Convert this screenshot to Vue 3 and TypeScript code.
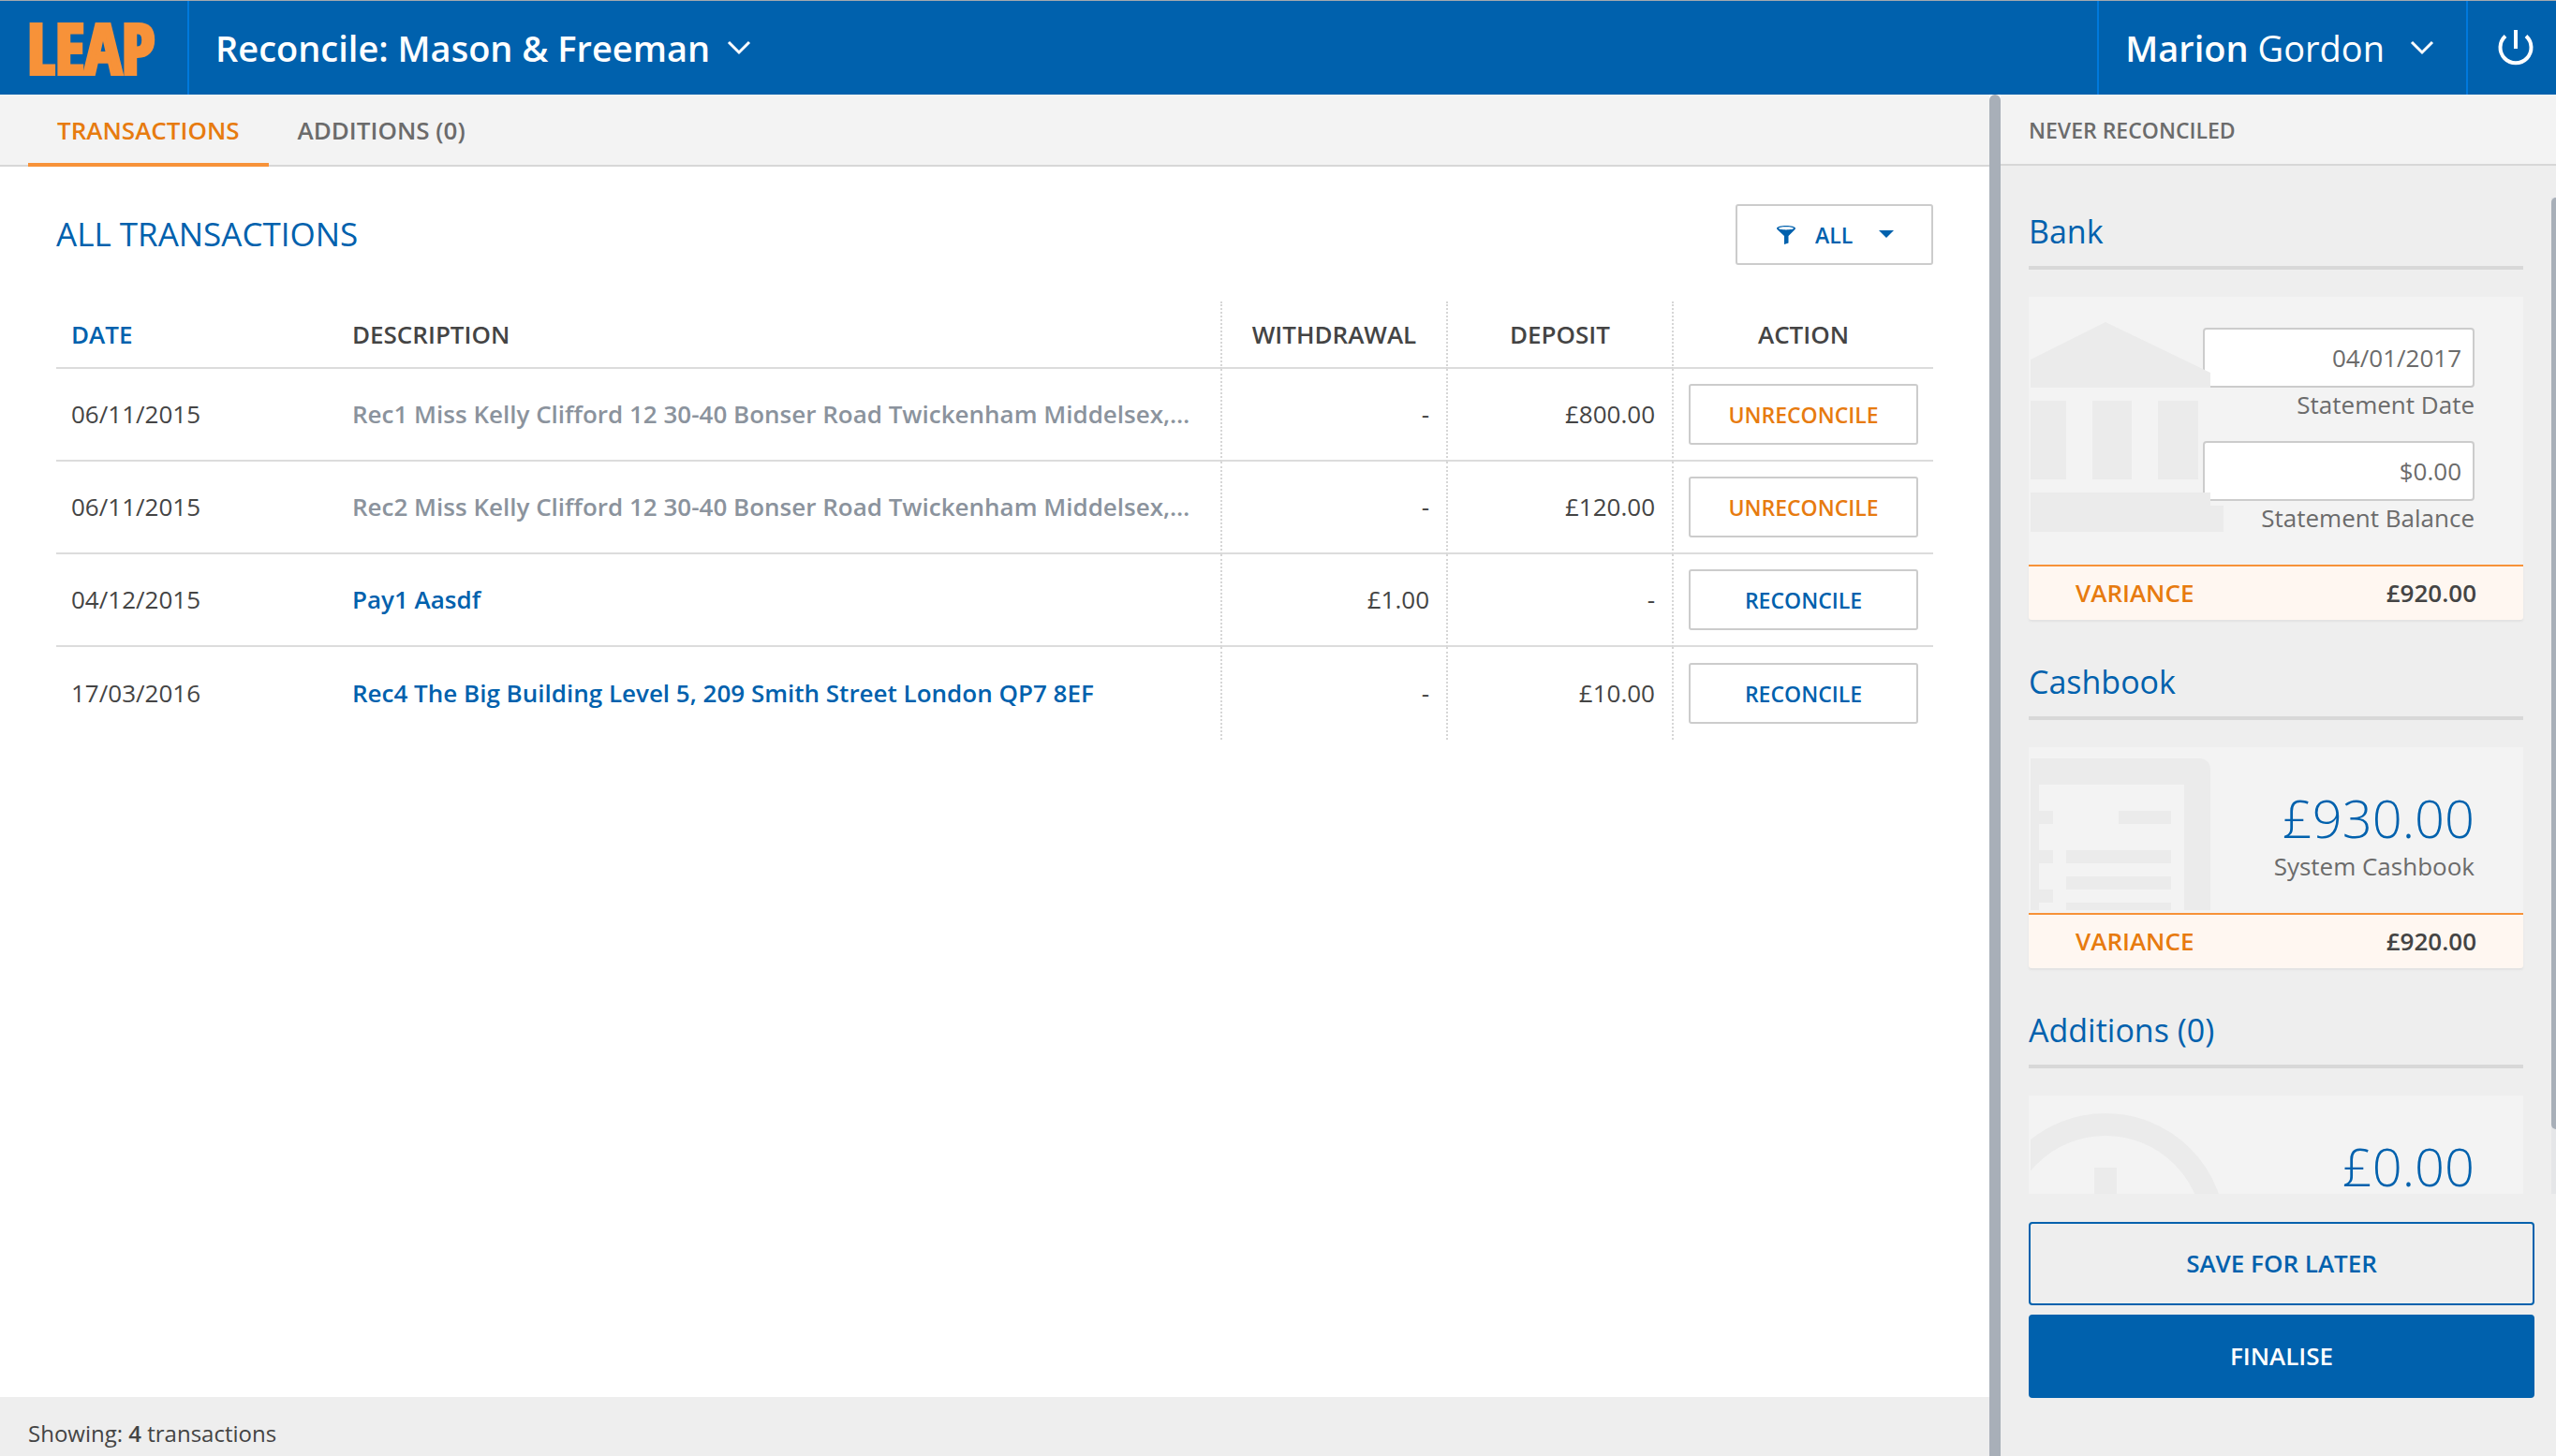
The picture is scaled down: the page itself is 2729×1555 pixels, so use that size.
<script setup lang="ts">
import { ref } from 'vue'

interface Transaction {
  id: number
  date: string
  description: string
  withdrawal: string
  deposit: string
  reconciled: boolean
}

const transactions = ref<Transaction[]>([
  { id: 1, date: '06/11/2015', description: 'Rec1 Miss Kelly Clifford 12 30-40 Bonser Road Twickenham Middelsex,…', withdrawal: '-', deposit: '£800.00', reconciled: true },
  { id: 2, date: '06/11/2015', description: 'Rec2 Miss Kelly Clifford 12 30-40 Bonser Road Twickenham Middelsex,…', withdrawal: '-', deposit: '£120.00', reconciled: true },
  { id: 3, date: '04/12/2015', description: 'Pay1 Aasdf', withdrawal: '£1.00', deposit: '-', reconciled: false },
  { id: 4, date: '17/03/2016', description: 'Rec4 The Big Building Level 5, 209 Smith Street London QP7 8EF', withdrawal: '-', deposit: '£10.00', reconciled: false },
])

const statementDate = ref('04/01/2017')
const statementBalance = ref('$0.00')
const filter = ref('all')
</script>

<template>
  <div class="app">
    <header class="topbar">
      <a class="logo" href="#">LEAP</a>
      <button class="account" type="button">
        <span>Reconcile: Mason &amp; Freeman</span>
        <svg class="chevron" viewBox="0 0 26 16" aria-hidden="true"><path d="M2 2l11 11L24 2" /></svg>
      </button>
      <button class="user" type="button">
        <span><b>Marion</b> Gordon</span>
        <svg class="chevron" viewBox="0 0 26 16" aria-hidden="true"><path d="M2 2l11 11L24 2" /></svg>
      </button>
      <button class="power" type="button" aria-label="Log out">
        <svg viewBox="0 0 38 38" aria-hidden="true">
          <path d="M8 6.500A16.500 16.500 0 1 0 30 6.500" />
          <path d="M19 0V20" />
        </svg>
      </button>
    </header>

    <div class="columns">
      <main class="main">
        <nav class="tabs">
          <a class="tab active" href="#transactions">TRANSACTIONS</a>
          <a class="tab" href="#additions">ADDITIONS (0)</a>
        </nav>

        <section class="content">
          <div class="heading">
            <h1>ALL TRANSACTIONS</h1>
            <div class="filter">
              <svg class="funnel" viewBox="0 0 20 20" aria-hidden="true">
                <path fill-rule="evenodd" d="M10 0c5.500 0 10 1.200 10 2.700 0 .6-.4 1.200-1 1.700L12.500 11v7.500L8 20v-9L1 4.400C.4 3.900 0 3.300 0 2.700 0 1.200 4.500 0 10 0zm0 1.200c-4.400 0-8 .7-8 1.600s3.600 1.600 8 1.600 8-.7 8-1.600-3.600-1.600-8-1.600z" />
              </svg>
              <select v-model="filter" aria-label="Filter transactions">
                <option value="all">ALL</option>
                <option value="reconciled">RECONCILED</option>
                <option value="unreconciled">UNRECONCILED</option>
              </select>
              <svg class="caret" viewBox="0 0 16 8" aria-hidden="true"><path d="M0 0h16L8 8z" /></svg>
            </div>
          </div>

          <table>
            <colgroup>
              <col class="col-date" />
              <col />
              <col class="col-amount" />
              <col class="col-amount" />
              <col class="col-action" />
            </colgroup>
            <thead>
              <tr>
                <th class="sorted">DATE</th>
                <th>DESCRIPTION</th>
                <th class="center ruled">WITHDRAWAL</th>
                <th class="center ruled">DEPOSIT</th>
                <th class="center ruled">ACTION</th>
              </tr>
            </thead>
            <tbody>
              <tr v-for="t in transactions" :key="t.id">
                <td>{{ t.date }}</td>
                <td class="description" :class="{ done: t.reconciled }">{{ t.description }}</td>
                <td class="amount ruled">{{ t.withdrawal }}</td>
                <td class="amount ruled">{{ t.deposit }}</td>
                <td class="ruled">
                  <button class="action" :class="{ undo: t.reconciled }" type="button">
                    {{ t.reconciled ? 'UNRECONCILE' : 'RECONCILE' }}
                  </button>
                </td>
              </tr>
            </tbody>
          </table>
        </section>

        <footer class="status">Showing: <b>{{ transactions.length }}</b>&nbsp;transactions</footer>
      </main>

      <div class="resizer"></div>

      <aside class="sidebar">
        <div class="last">NEVER RECONCILED</div>

        <div class="scroll">
          <div class="scroll-body">
            <section class="group">
              <h2>Bank</h2>
              <div class="card">
                <div class="fields">
                  <input id="statement-date" v-model="statementDate" type="text" />
                  <label for="statement-date">Statement Date</label>
                  <input id="statement-balance" v-model="statementBalance" type="text" />
                  <label for="statement-balance">Statement Balance</label>
                </div>
                <svg class="mark" viewBox="0 0 210 287" aria-hidden="true">
                  <path d="M0 67L80 27l112 54v16H0zM0 111h38v84H0zM66 111h42v84H66zM136 111h43v84h-43zM0 209h192v14h14v28H0z" />
                </svg>
              </div>
              <div class="variance"><span>VARIANCE</span><b>£920.00</b></div>
            </section>

            <section class="group">
              <h2>Cashbook</h2>
              <div class="card">
                <div class="total">£930.00</div>
                <div>System Cashbook</div>
                <svg class="mark" viewBox="0 0 210 176" aria-hidden="true">
                  <path fill-rule="evenodd" d="M0 12h182q10 2 10 12v150H0zM9 40v28h15v14H9v28h15v14H9v28h15v14H9v8h155V40z" />
                  <path d="M94 68h56v14H94zM38 110h112v14H38zM38 138h112v14H38zM38 166h112v8H38z" />
                </svg>
              </div>
              <div class="variance"><span>VARIANCE</span><b>£920.00</b></div>
            </section>

            <section class="group">
              <h2>Additions (0)</h2>
              <div class="card">
                <div class="total">£0.00</div>
                <svg class="mark" viewBox="0 0 210 176" aria-hidden="true">
                  <circle cx="80" cy="147" r="116" />
                  <path d="M68 77h24v58h58v24H92v17H68v-17H10v-24h58z" />
                </svg>
              </div>
            </section>
          </div>
          <div class="track"><div class="thumb"></div></div>
        </div>

        <div class="buttons">
          <button class="save" type="button">SAVE FOR LATER</button>
          <button class="finalise" type="button">FINALISE</button>
        </div>
      </aside>
    </div>
  </div>
</template>

<style>
body {
  margin: 0;
}
</style>

<style scoped>
* {
  box-sizing: border-box;
}

.app {
  display: flex;
  flex-direction: column;
  height: 100vh;
  overflow: hidden;
  background: #fff;
  color: #444;
  font: 400 26px/36px "Open Sans", sans-serif;
}

button,
select,
input {
  margin: 0;
  font: inherit;
}

button {
  cursor: pointer;
}

a {
  text-decoration: none;
}

b {
  font-weight: 600;
}

/* Top bar */
.topbar {
  display: flex;
  flex: none;
  height: 101px;
  border-top: 1px solid #a3a9ae;
  background: #0061ad;
  color: #fff;
}

.logo {
  display: flex;
  align-items: center;
  width: 202px;
  padding-left: 29px;
  border-right: 2px solid #0079dc;
  color: #f79239;
  font: 800 74px/98px "Open Sans Condensed", "Open Sans", sans-serif;
  -webkit-text-stroke: 4px #f79239;
}

.topbar button {
  display: flex;
  align-items: center;
  padding: 0 28px;
  border: 0;
  background: none;
  color: inherit;
  font-size: 38px;
}

.topbar .account {
  gap: 18px;
  font-weight: 600;
}

.topbar .user {
  gap: 27px;
  margin-left: auto;
  padding-right: 34px;
  border-left: 2px solid #0079dc;
}

.topbar .power {
  padding: 0 24px 0 32px;
  border-left: 2px solid #0079dc;
}

.topbar svg {
  fill: none;
  stroke: #fff;
}

.chevron {
  width: 26px;
  height: 16px;
  stroke-width: 3px;
}

.power svg {
  width: 38px;
  height: 38px;
  stroke-width: 4px;
}

/* Main column */
.columns {
  display: flex;
  flex: 1;
  min-height: 0;
}

.main {
  display: flex;
  flex: 1;
  flex-direction: column;
  min-width: 0;
}

.tabs {
  display: flex;
  flex: none;
  height: 77px;
  padding-left: 30px;
  border-bottom: 2px solid #d7d7d7;
  background: #f3f3f3;
}

.tab {
  height: 77px;
  padding: 0 31px;
  color: #6b6b6b;
  font-weight: 600;
  line-height: 76px;
}

.tab.active {
  border-bottom: 4px solid #f79239;
  color: #e77b0f;
}

.content {
  flex: 1;
  padding: 40px 60px 0;
}

.heading {
  display: flex;
  align-items: center;
  justify-content: space-between;
  margin-bottom: 39px;
}

h1,
h2 {
  margin: 0;
  color: #0061ad;
  font-weight: 400;
}

h1 {
  padding-bottom: 2px;
  font-size: 35px;
  line-height: 48px;
}

.filter {
  position: relative;
  width: 211px;
  height: 65px;
}

.filter select {
  width: 100%;
  height: 100%;
  padding: 0 0 0 83px;
  appearance: none;
  border: 2px solid #ccc;
  border-radius: 3px;
  background: #fff;
  color: #0061ad;
  font-size: 23px;
  font-weight: 600;
}

.filter svg {
  position: absolute;
  fill: #0061ad;
  pointer-events: none;
}

.funnel {
  top: 23px;
  left: 44px;
  width: 20px;
  height: 20px;
}

.caret {
  top: 28px;
  right: 42px;
  width: 16px;
  height: 8px;
}

table {
  width: 100%;
  border-spacing: 0;
  table-layout: fixed;
}

.col-date {
  width: 300px;
}

.col-amount {
  width: 241px;
}

.col-action {
  width: 279px;
}

th,
td {
  padding: 0 16px;
  border-bottom: 2px solid #dcdcdc;
  text-align: left;
  white-space: nowrap;
}

th {
  height: 72px;
  font-weight: 600;
}

td {
  height: 99px;
  padding-bottom: 2px;
}

tbody tr:last-child td {
  border-bottom: 0;
}

.ruled {
  border-left: 2px dotted #d6d6d6;
  padding-bottom: 0;
}

.sorted {
  color: #0061ad;
}

.center {
  text-align: center;
}

.amount {
  padding-right: 18px;
  padding-bottom: 2px;
  text-align: right;
}

.description {
  overflow: hidden;
  color: #0061ad;
  font-weight: 600;
  text-overflow: ellipsis;
}

.description.done {
  color: #8b939d;
}

.action {
  display: block;
  width: 100%;
  height: 65px;
  border: 2px solid #ccc;
  border-radius: 3px;
  background: #fff;
  color: #0061ad;
  font-size: 23px;
  font-weight: 600;
}

.action.undo {
  color: #e77b0f;
}

.status {
  flex: none;
  height: 63px;
  padding: 4px 30px 0;
  background: #eee;
  font-size: 24px;
  line-height: 70px;
}

.resizer {
  flex: none;
  width: 12px;
  border-radius: 6px 6px 0 0;
  background: #a8afb8;
}

/* Sidebar */
.sidebar {
  display: flex;
  flex: none;
  flex-direction: column;
  width: 593px;
  background: #eee;
}

.last {
  flex: none;
  height: 76px;
  padding-left: 30px;
  border-bottom: 2px solid #d7d7d7;
  background: #f3f3f3;
  color: #6b6b6b;
  font-size: 23px;
  font-weight: 600;
  line-height: 76px;
}

.scroll {
  position: relative;
  flex: 1;
  min-height: 0;
  overflow: hidden;
}

.scroll-body {
  padding: 4px 35px 0 30px;
}

.group {
  padding-top: 43px;
}

h2 {
  margin-bottom: 29px;
  padding-bottom: 14px;
  border-bottom: 4px solid #d8d8d8;
  font-size: 34px;
  line-height: 46px;
}

.card {
  position: relative;
  overflow: hidden;
  padding: 33px 52px 32px;
  background: #f3f3f3;
  color: #6b6b6b;
  text-align: right;
}

.fields {
  display: flex;
  flex-direction: column;
  align-items: flex-end;
}

.fields input {
  width: 290px;
  height: 64px;
  padding: 0 12px;
  border: 2px solid #ccc;
  border-radius: 4px;
  background: #fff;
  color: #6b6b6b;
  text-align: right;
}

.fields label {
  height: 57px;
}

.fields label:last-child {
  height: 36px;
}

.mark {
  position: absolute;
  top: 0;
  left: 2px;
  width: 210px;
  fill: #ebebeb;
  pointer-events: none;
}

.mark circle {
  fill: none;
  stroke: #ebebeb;
  stroke-width: 24px;
}

.total {
  padding-top: 8px;
  color: #0061ad;
  font-size: 56px;
  font-weight: 300;
  line-height: 68px;
}

.variance {
  display: flex;
  justify-content: space-between;
  padding: 10px 50px 11px;
  border-top: 2px solid #f79239;
  border-radius: 0 0 3px 3px;
  background: #fff7f1;
  box-shadow: 0 2px 2px #e2e2e2;
}

.variance span {
  color: #e77b0f;
  font-weight: 600;
}

.track {
  position: absolute;
  top: 34px;
  right: 0;
  bottom: 0;
  width: 5px;
  background: #e5e6e8;
}

.thumb {
  height: calc(100% - 69px);
  border-radius: 5px 0 0 5px;
  background: #a8afb8;
}

.buttons {
  display: flex;
  flex: none;
  flex-direction: column;
  gap: 10px;
  padding: 30px 23px 62px 30px;
}

.buttons button {
  height: 89px;
  padding-bottom: 3px;
  border: 2px solid #0061ad;
  border-radius: 4px;
  background: none;
  color: #0061ad;
  font-weight: 600;
}

.buttons .finalise {
  background: #0061ad;
  color: #fff;
}
</style>
